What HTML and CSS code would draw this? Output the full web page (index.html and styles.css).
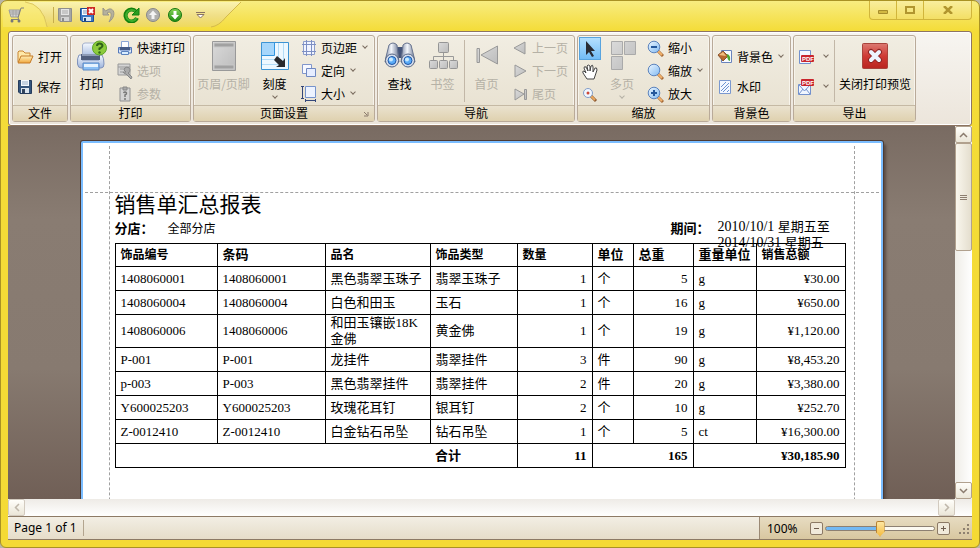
FILE: index.html
```html
<!DOCTYPE html>
<html lang="zh-CN">
<head>
<meta charset="utf-8">
<title>销售单汇总报表</title>
<link rel="stylesheet" href="styles.css">
</head>
<body>
<svg width="0" height="0" class="defs" aria-hidden="true">
  <defs>
    <linearGradient id="gray" x1="0" y1="0" x2="1" y2="1"><stop offset="0" stop-color="#dadada"/><stop offset="1" stop-color="#bcbcbc"/></linearGradient>
    <linearGradient id="blue" x1="0" y1="0" x2="1" y2="1"><stop offset="0" stop-color="#eef7ff"/><stop offset="1" stop-color="#7fb9f2"/></linearGradient>
    <linearGradient id="green" x1="0" y1="0" x2="0" y2="1"><stop offset="0" stop-color="#8ad75a"/><stop offset="1" stop-color="#1c8a12"/></linearGradient>
    <linearGradient id="steel" x1="0" y1="0" x2="1" y2="0"><stop offset="0" stop-color="#7c88a4"/><stop offset=".45" stop-color="#f4f7fc"/><stop offset="1" stop-color="#6c7894"/></linearGradient>
    <linearGradient id="printer" x1="0" y1="0" x2="0" y2="1"><stop offset="0" stop-color="#f5f9ff"/><stop offset="1" stop-color="#9db4dc"/></linearGradient>
    <linearGradient id="folder" x1="0" y1="0" x2="0" y2="1"><stop offset="0" stop-color="#fff0b8"/><stop offset="1" stop-color="#f0a63c"/></linearGradient>
    <linearGradient id="red" x1="0" y1="0" x2="0" y2="1"><stop offset="0" stop-color="#dc7a72"/><stop offset=".5" stop-color="#cf3b35"/><stop offset="1" stop-color="#b92520"/></linearGradient>
    <linearGradient id="tab" x1="0" y1="0" x2="0" y2="1"><stop offset="0" stop-color="#faf3b0"/><stop offset=".55" stop-color="#f0df86"/><stop offset="1" stop-color="#efd95c"/></linearGradient>
  </defs>
</svg>

<div class="window">
  <header class="titlebar">
    <svg class="titlebar-shape" width="245" height="28" viewBox="0 0 245 28" aria-hidden="true">
      <path d="M25 2Q43 4 47 27H211Q219 26 226 17L241 2Z" fill="url(#tab)"/>
      <path d="M25 2Q43 4 47 27M211 27Q219 26 226 17L241 2" fill="none" stroke="#d3b94c"/>
      <path d="M3 2H25Q43 4 47 27H3Z" fill="#faef9a" opacity=".35"/>
    </svg>
    <div class="quick">
      <button class="tool cart" aria-label="应用菜单"><svg width="17" height="16" viewBox="0 0 17 16"><path d="M1 3H12L10 10H3Z" fill="#d4d4d4" stroke="#9a9a9a"/><path d="M2 5H11M3 7H10M5 3V10M8 3V10" fill="none" stroke="#a4a4a4"/><path d="M16 1H13L10 11 11 12.500H3" fill="none" stroke="#808080"/><circle cx="4" cy="14" r="1.500" fill="#777"/><circle cx="11" cy="14" r="1.500" fill="#777"/></svg></button>
      <span class="quick-sep"></span>
      <button class="tool" aria-label="保存"><svg width="16" height="16" viewBox="0 0 16 16"><path d="M1.500 1.500H14.500V14.500H3L1.500 13Z" fill="#a5a5a5" stroke="#8e8e8e"/><path d="M4 2H12V8H4Z" fill="#e4e4e4"/><path d="M5 4H11M5 6H11" stroke="#aaa"/><path d="M4 10H12V14H4Z" fill="#d3d3d3"/><path d="M5 11H7V14H5Z" fill="#8b8b8b"/></svg></button>
      <button class="tool" aria-label="保存并关闭"><svg width="16" height="16" viewBox="0 0 16 16"><path d="M1.500 1.500H14.500V14.500H3L1.500 13Z" fill="#3977c5" stroke="#1d4c94"/><path d="M3 2H11V8H3Z" fill="#f7fbff"/><path d="M4 4H8M4 6H8" stroke="#7796bb"/><path d="M4 10H12V14H4Z" fill="#d7e4f2"/><path d="M5 11H7V14H5Z" fill="#174174"/><path d="M8 0H16V8H8Z" fill="#cc2925"/><path d="M10 2L14 6M14 2L10 6" stroke="#fff" stroke-width="2"/></svg></button>
      <button class="tool" aria-label="撤销"><svg width="16" height="16" viewBox="0 0 16 16"><path d="M2 1V8H8L6 6C10 3.500 12 7 8 15C15 10 14 1 8 2L4.500 4Z" fill="#b5b19d" stroke="#99968a"/></svg></button>
      <button class="tool" aria-label="刷新"><svg width="17" height="16" viewBox="0 0 17 16"><path d="M14 11A6 6 0 1 1 13 4.500" fill="none" stroke="#14810e" stroke-width="4"/><path d="M13.500 11A5.500 5.500 0 1 1 12.500 4.500" fill="none" stroke="#3ead2c" stroke-width="2"/><path d="M16 1V8H9Z" fill="#2b9d20" stroke="#14810e"/></svg></button>
      <button class="tool" aria-label="上移"><svg width="16" height="16" viewBox="0 0 16 16"><circle cx="8" cy="8" r="6.500" fill="#b0b0ae" stroke="#878787"/><path d="M8 3.500L12 8H9.500V12H6.500V8H4Z" fill="#f4f4f4"/></svg></button>
      <button class="tool" aria-label="下移"><svg width="16" height="16" viewBox="0 0 16 16"><circle cx="8" cy="8" r="6.500" fill="url(#green)" stroke="#167411"/><path d="M8 12.500L12 8H9.500V4H6.500V8H4Z" fill="#fff"/></svg></button>
      <button class="tool more" aria-label="自定义工具栏"><svg width="9" height="8" viewBox="0 0 9 8"><path d="M0 1.500H9M1 3.500L4.500 7 8 3.500Z" fill="#fff" stroke="#887263"/></svg></button>
    </div>
    <div class="caption">
      <button aria-label="最小化"><svg width="10" height="8" viewBox="0 0 10 8"><path d="M.5 4.500H9.500V7.500H.5Z" fill="#d2b843" stroke="#a68c2c"/></svg></button>
      <button aria-label="最大化"><svg width="10" height="8" viewBox="0 0 10 8"><path d="M1 1H9V7H1Z" fill="none" stroke="#b1962f" stroke-width="2"/></svg></button>
      <button class="caption-close" aria-label="关闭"><svg width="10" height="8" viewBox="0 0 10 8"><path d="M1 0L9 8M9 0L1 8" stroke="#b1962f" stroke-width="2.500"/></svg></button>
    </div>
  </header>

  <nav class="ribbon" aria-label="打印预览">
    <section class="group">
      <div class="tools pair">
        <button class="small"><svg width="17" height="14" viewBox="0 0 17 14"><path d="M1 12V2L2 1H6L8 3H13V6" fill="#ffe8a8" stroke="#c98634"/><path d="M1 13L4 6H16L13 13Z" fill="url(#folder)" stroke="#c47b28"/></svg>打开</button>
        <button class="small"><svg width="16" height="16" viewBox="0 0 16 16"><path d="M1.500 1.500H14.500V14.500H3L1.500 13Z" fill="#34557d" stroke="#263c5c"/><path d="M4 1H12V7H4Z" fill="#f4f9ff"/><path d="M5 3H11M5 5H11" stroke="#95acc6"/><path d="M4 9H12V14H4Z" fill="#dbe5ef"/><path d="M5 10H8V14H5Z" fill="#31445e"/></svg>保存</button>
      </div>
      <h2>文件</h2>
    </section>

    <section class="group">
      <div class="tools">
        <button class="large print"><svg width="32" height="32" viewBox="0 0 32 32"><path d="M6.500 5Q7 3 9 3H23V18H6.500Z" fill="url(#printer)" stroke="#a3b0cb"/><path d="M3 15Q1 18 1.500 24Q2 28 5 28H25Q28 28 28 24Q28 18 26 15H23V20H6V15Z" fill="url(#printer)" stroke="#7f92bb"/><path d="M5 14H24V20H5Z" fill="#4f5e7d"/><path d="M6 14H23V16H6Z" fill="#8d9bb6"/><path d="M7 23H23V30H7Z" fill="#8bc0f5" stroke="#5b87c4"/><path d="M8 24H22V27H8Z" fill="#e4f2ff"/><circle cx="23.500" cy="8" r="7" fill="#8ccb3c" stroke="#5da528"/><path d="M21 6Q21 3.500 23.500 3.500Q26.500 3.500 26.500 6Q26 7.500 23.500 8.500V10" stroke="#2f6418" stroke-width="2" fill="none"/><circle cx="23.500" cy="12.500" r="1.200" fill="#2f6418"/></svg><span>打印</span></button>
        <div class="stack print-stack">
          <button class="small"><svg width="16" height="16" viewBox="0 0 16 16"><path d="M4.500 1.500H11.500V8H4.500Z" fill="#fff" stroke="#8ca6d4"/><path d="M1.500 7.500H3V10H13V7.500H14.500V13H1.500Z" fill="#dce9fb" stroke="#5579bb"/><path d="M3 7H13V10H3Z" fill="#475c86"/><path d="M4.500 11.500H11.500V14.500H4.500Z" fill="#d9edff" stroke="#5b82bd"/></svg>快速打印</button>
          <button class="small" disabled><svg width="16" height="16" viewBox="0 0 16 16"><path d="M1 1H13V12H1Z" fill="#d4d4d4" stroke="#999"/><path d="M1 4H13M3 6H7M3 9H6" stroke="#999"/><path d="M7 7A3 3 0 1 1 11 10L15 14 14 16 9 11Q7 11 6 9L9 9Z" fill="#aaa" stroke="#888"/></svg>选项</button>
          <button class="small" disabled><svg width="16" height="16" viewBox="0 0 16 16"><path d="M3 2H13V15H3Z" fill="#d4d4d4" stroke="#909090"/><path d="M6 1H10V4H6Z" fill="#aaa" stroke="#888"/><path d="M6.500 7Q8 5 9.500 7Q10 8 8 9V11M8 12V14" stroke="#777" stroke-width="1.500" fill="none"/></svg>参数</button>
        </div>
      </div>
      <h2>打印</h2>
    </section>

    <section class="group">
      <div class="tools">
        <button class="large header-footer" disabled><svg width="32" height="32" viewBox="0 0 32 32"><path d="M4.500 1.500H27.500V30.500H4.500Z" fill="url(#gray)" stroke="#999"/><path d="M6 3H26V7H6ZM6 25H26V29H6Z" fill="#a1a1a1" stroke="#c8c8c8"/></svg><span>页眉/页脚</span></button>
        <button class="large scale"><svg width="32" height="32" viewBox="0 0 32 32"><path d="M2.500 2.500H29.500V29.500H2.500Z" fill="#eef8ff" stroke="#3d94d4"/><path d="M3 3H15V15H3Z" fill="#a6d6fb"/><path d="M15.500 3V15.500H3" fill="none" stroke="#3295df"/><path d="M19.500 3V19.500H3M24.500 3V24.500H3" fill="none" stroke="#b4dcf7"/><path d="M18 16L24 21 26 18V27H17L20 25 15 20Z" fill="#29292c"/></svg><span>刻度</span><i class="arrow"></i></button>
        <div class="stack setup-stack">
          <button class="small"><svg width="16" height="16" viewBox="0 0 16 16"><path d="M2.500 1.500H13.500V14.500H2.500Z" fill="#f1f4ff" stroke="#8c9cca"/><path d="M5.500 0V16M10.500 0V16M1 4.500H15M1 11.500H15" stroke="#7d8fc4"/></svg>页边距<i class="arrow"></i></button>
          <button class="small"><svg width="16" height="16" viewBox="0 0 16 16"><path d="M1.500 1.500H10.500V10.500H1.500Z" fill="#f7f9ff" stroke="#8196cb"/><path d="M5.500 5.500H14.500V13.500H5.500Z" fill="#e6edff" stroke="#7089c2"/></svg>定向<i class="arrow"></i></button>
          <button class="small"><svg width="16" height="16" viewBox="0 0 16 16"><path d="M4.500 .5H14.500V11.500H4.500Z" fill="#edf3ff" stroke="#7694cc"/><path d="M0 .5H3M1.500 1V12M0 12.500H3M4 14.500H15M4.500 13V16M14.500 13V16" stroke="#34477a" fill="none"/></svg>大小<i class="arrow"></i></button>
        </div>
      </div>
      <h2>页面设置</h2>
      <button class="launcher" aria-label="页面设置选项"><svg width="6" height="6" viewBox="0 0 6 6"><path d="M1 1L4 4M5 1V5H1" fill="none" stroke="#8b7b6c"/></svg></button>
    </section>

    <section class="group">
      <div class="tools">
        <button class="large find"><svg width="32" height="32" viewBox="0 0 32 32"><path d="M13 7H19V18H13Z" fill="#45557a"/><path d="M5 5Q9 1 13 5L15 22H1L2 17Z" fill="url(#steel)" stroke="#68748f"/><path d="M19 5Q23 1 27 5L30 17 31 22H17Z" fill="url(#steel)" stroke="#68748f"/><circle cx="8" cy="20.500" r="6.500" fill="#d7dfed" stroke="#566583"/><circle cx="24" cy="20.500" r="6.500" fill="#d7dfed" stroke="#566583"/><circle cx="8" cy="20.500" r="4" fill="#5aabf7" stroke="#1f56a5"/><circle cx="24" cy="20.500" r="4" fill="#5aabf7" stroke="#1f56a5"/><circle cx="7" cy="19.500" r="2" fill="#c9eaff"/><circle cx="23" cy="19.500" r="2" fill="#c9eaff"/></svg><span>查找</span></button>
        <button class="large bookmark" disabled><svg width="32" height="32" viewBox="0 0 32 32"><path d="M16.500 13V20M6.500 20V16.500H26.500V20" stroke="#999" fill="none"/><g fill="url(#gray)" stroke="#959595"><rect x="11.500" y="2.500" width="10" height="10" rx="1"/><rect x="2.500" y="20.500" width="8" height="8" rx="1"/><rect x="12.500" y="20.500" width="8" height="8" rx="1"/><rect x="22.500" y="20.500" width="8" height="8" rx="1"/></g></svg><span>书签</span></button>
        <span class="rule"></span>
        <button class="large first" disabled><svg width="32" height="32" viewBox="0 0 32 32"><path d="M6 8.500H8.500V22.500H6ZM26.500 6V24L10 15Z" fill="url(#gray)" stroke="#999"/></svg><span>首页</span></button>
        <div class="stack nav-stack">
          <button class="small" disabled><svg width="16" height="16" viewBox="0 0 16 16"><path d="M13 2V14L2 8Z" fill="url(#gray)" stroke="#999"/></svg>上一页</button>
          <button class="small" disabled><svg width="16" height="16" viewBox="0 0 16 16"><path d="M3 2V14L14 8Z" fill="url(#gray)" stroke="#999"/></svg>下一页</button>
          <button class="small" disabled><svg width="16" height="16" viewBox="0 0 16 16"><path d="M3 3V14L12 8ZM12.500 3.500H14.500V13.500H12.500Z" fill="url(#gray)" stroke="#999"/></svg>尾页</button>
        </div>
      </div>
      <h2>导航</h2>
    </section>

    <section class="group">
      <div class="tools">
        <div class="modes">
          <button class="mode active" aria-label="选择"><svg width="16" height="20" viewBox="0 0 16 20"><path d="M4 2V16L7 13 10 18 12 17 9 12H13Z" fill="#292c35"/></svg></button>
          <button class="mode" aria-label="手形工具"><svg width="18" height="18" viewBox="0 0 18 18"><path d="M6 16L2 10Q1 8 3 8L5 10 3 5Q3 3 5 4L7 8 6 3Q7 1 9 3L9 8 10 3Q12 1 12 4V9L14 5Q16 4 16 7L14 13 13 16Z" fill="#fff" stroke="#444"/></svg></button>
          <button class="mode" aria-label="放大镜"><svg width="16" height="16" viewBox="0 0 16 16"><path d="M9 9L14 14" stroke="#8d5931" stroke-width="3"/><path d="M9 9L13 13" stroke="#eaa75d" stroke-width="2"/><circle cx="6" cy="6" r="4.500" fill="#f1f7ff" stroke="#819dc8"/><circle cx="6" cy="6" r="1.500" fill="#cd4938"/></svg></button>
        </div>
        <button class="large pages" disabled><svg width="32" height="32" viewBox="0 0 32 32"><path d="M5.500 1.500H16.500V14.500H5.500ZM18.500 1.500H29.500V14.500H18.500ZM5.500 16.500H16.500V29.500H5.500Z" fill="url(#gray)" stroke="#aaa"/></svg><span>多页</span><i class="arrow"></i></button>
        <div class="stack zoom-stack">
          <button class="small"><svg width="17" height="17" viewBox="0 0 17 17"><path d="M10 10L16 16" stroke="#a56835" stroke-width="3"/><path d="M11 11L15 15" stroke="#f0b16c" stroke-width="2"/><circle cx="7" cy="7" r="5.800" fill="url(#blue)" stroke="#5c83bd"/><path d="M4 7H10" stroke="#25589c" stroke-width="2"/></svg>缩小</button>
          <button class="small"><svg width="17" height="17" viewBox="0 0 17 17"><path d="M10 10L16 16" stroke="#a56835" stroke-width="3"/><path d="M11 11L15 15" stroke="#f0b16c" stroke-width="2"/><circle cx="7" cy="7" r="5.800" fill="url(#blue)" stroke="#5c83bd"/></svg>缩放<i class="arrow"></i></button>
          <button class="small"><svg width="17" height="17" viewBox="0 0 17 17"><path d="M10 10L16 16" stroke="#a56835" stroke-width="3"/><path d="M11 11L15 15" stroke="#f0b16c" stroke-width="2"/><circle cx="7" cy="7" r="5.800" fill="url(#blue)" stroke="#5c83bd"/><path d="M4 7H10M7 4V10" stroke="#25589c" stroke-width="2"/></svg>放大</button>
        </div>
      </div>
      <h2>缩放</h2>
    </section>

    <section class="group">
      <div class="tools pair">
        <button class="small"><svg width="16" height="16" viewBox="0 0 16 16"><path d="M4.500 1.500H14.500V13.500H4.500Z" fill="#f8fbff" stroke="#6a84bd"/><path d="M1 6L6 2 11 7 6 12Z" fill="#b86930" stroke="#8a5530"/><path d="M2 6L6 3 9 7Z" fill="#f2c083"/><path d="M10 5Q14 6 13 12Q10 12 10 5Z" fill="#4ba831"/></svg>背景色<i class="arrow"></i></button>
        <button class="small"><svg width="16" height="16" viewBox="0 0 16 16"><path d="M2.500 1.500H13.500V14.500H2.500Z" fill="#f4f8ff" stroke="#7a98cf"/><path d="M4 8L9 3M4 12L12 4M6 13L12 7M10 13L12 11" stroke="#6b91d0"/></svg>水印</button>
      </div>
      <h2>背景色</h2>
    </section>

    <section class="group">
      <div class="tools">
        <div class="pair export-stack">
          <button class="small" aria-label="导出 PDF"><svg width="16" height="16" viewBox="0 0 16 16"><path d="M1.500 1.500H12.500V14.500H1.500Z" fill="#f3f7ff" stroke="#7391cd"/><rect x="3" y="6" width="13" height="7" rx="1" fill="#c9252d"/><text x="4" y="12" class="pdf">PDF</text></svg><i class="arrow"></i></button>
          <button class="small" aria-label="发送 PDF"><svg width="16" height="16" viewBox="0 0 16 16"><path d="M.5 5.500H12.500V15.500H.5Z" fill="#f1f6ff" stroke="#7391cd"/><path d="M1 6L6.500 12 12 6M1 15L5 10M12 15L8 10" fill="none" stroke="#7391cd"/><rect x="3" y="0" width="13" height="7" rx="1" fill="#c9252d"/><text x="4" y="6" class="pdf">PDF</text></svg><i class="arrow"></i></button>
        </div>
        <span class="rule export-rule"></span>
        <button class="large close"><svg width="32" height="32" viewBox="0 0 32 32"><rect x="3.500" y="3.500" width="25" height="25" rx="1" fill="url(#red)" stroke="#a8443c"/><path d="M12 12L20 20M20 12L12 20" stroke="#8e2424" stroke-width="6" stroke-linecap="round"/><path d="M12 12L20 20M20 12L12 20" stroke="#eef5ff" stroke-width="4" stroke-linecap="round"/></svg><span>关闭打印预览</span></button>
      </div>
      <h2>导出</h2>
    </section>
  </nav>

  <div class="viewer">
    <main class="workspace">
      <article class="paper">
        <i class="guide guide-left"></i><i class="guide guide-right"></i><i class="guide guide-top"></i>
        <h1>销售单汇总报表</h1>
        <div class="info">
          <strong>分店：</strong><span class="branch">全部分店</span>
          <strong class="period">期间：</strong>
          <span class="dates"><span class="day">2010/10/1 </span>星期五至<br><span class="day">2014/10/31 </span>星期五</span>
        </div>
        <table>
          <colgroup><col class="c-id"><col class="c-code"><col class="c-name"><col class="c-type"><col class="c-qty"><col class="c-unit"><col class="c-weight"><col class="c-wunit"><col class="c-total"></colgroup>
          <thead><tr><th class="tight">饰品编号</th><th>条码</th><th class="tight">品名</th><th class="tight">饰品类型</th><th class="tight">数量</th><th>单位</th><th>总重</th><th>重量单位</th><th class="tight">销售总额</th></tr></thead>
          <tbody>
            <tr><td>1408060001</td><td>1408060001</td><td>黑色翡翠玉珠子</td><td>翡翠玉珠子</td><td class="num">1</td><td>个</td><td class="num">5</td><td>g</td><td class="num">¥30.00</td></tr>
            <tr><td>1408060004</td><td>1408060004</td><td>白色和田玉</td><td>玉石</td><td class="num">1</td><td>个</td><td class="num">16</td><td>g</td><td class="num">¥650.00</td></tr>
            <tr><td>1408060006</td><td>1408060006</td><td class="wrap">和田玉镶嵌18K金佛</td><td>黄金佛</td><td class="num">1</td><td>个</td><td class="num">19</td><td>g</td><td class="num">¥1,120.00</td></tr>
            <tr><td>P-001</td><td>P-001</td><td>龙挂件</td><td>翡翠挂件</td><td class="num">3</td><td>件</td><td class="num">90</td><td>g</td><td class="num">¥8,453.20</td></tr>
            <tr><td>p-003</td><td>P-003</td><td>黑色翡翠挂件</td><td>翡翠挂件</td><td class="num">2</td><td>件</td><td class="num">20</td><td>g</td><td class="num">¥3,380.00</td></tr>
            <tr><td>Y600025203</td><td>Y600025203</td><td>玫瑰花耳钉</td><td>银耳钉</td><td class="num">2</td><td>个</td><td class="num">10</td><td>g</td><td class="num">¥252.70</td></tr>
            <tr><td>Z-0012410</td><td>Z-0012410</td><td>白金钻石吊坠</td><td>钻石吊坠</td><td class="num">1</td><td>个</td><td class="num">5</td><td>ct</td><td class="num">¥16,300.00</td></tr>
          </tbody>
          <tfoot><tr><td colspan="3" class="open-right"></td><td class="open-left">合计</td><td class="num">11</td><td colspan="2" class="num">165</td><td colspan="2" class="num">¥30,185.90</td></tr></tfoot>
        </table>
      </article>
    </main>
    <div class="vscroll">
      <button class="scroll-button" aria-label="向上滚动"><svg width="9" height="6" viewBox="0 0 9 6"><path d="M1 5L4.500 1.500 8 5"/></svg></button>
      <div class="thumb"><i></i><i></i><i></i></div>
      <button class="scroll-button last" aria-label="向下滚动"><svg width="9" height="6" viewBox="0 0 9 6"><path d="M1 1L4.500 4.500 8 1"/></svg></button>
    </div>
  </div>
  <div class="hscroll">
    <button class="scroll-button faded" aria-label="向左滚动"><svg width="6" height="9" viewBox="0 0 6 9"><path d="M5 1L1.500 4.500 5 8"/></svg></button>
    <button class="scroll-button faded" aria-label="向右滚动"><svg width="6" height="9" viewBox="0 0 6 9"><path d="M1 1L4.500 4.500 1 8"/></svg></button>
  </div>
  <footer class="status">
    <span class="page-count">Page 1 of 1</span>
    <div class="zoom">
      <label for="zoom">100%</label>
      <button aria-label="缩小"><svg width="7" height="7" viewBox="0 0 7 7"><path d="M1 3.500H6"/></svg></button>
      <input id="zoom" type="range" min="0" max="200" value="100">
      <button aria-label="放大"><svg width="7" height="7" viewBox="0 0 7 7"><path d="M1 3.500H6M3.500 1V6"/></svg></button>
      <svg class="grip" width="14" height="14" viewBox="0 0 14 14"><path d="M9 1H11V3H9ZM5 5H7V7H5ZM9 5H11V7H9ZM1 9H3V11H1ZM5 9H7V11H5ZM9 9H11V11H9Z" fill="#8e8170"/></svg>
    </div>
  </footer>
</div>
</body>
</html>
```
FILE: styles.css
```css
* { box-sizing: border-box; }
body {
  margin: 0;
  background: #b9b5a5;
  color: #000;
  font-family: "Noto Sans CJK SC", sans-serif;
  font-size: 12px;
}
button {
  padding: 0;
  border: 0;
  background: none;
  color: inherit;
  font: inherit;
  white-space: nowrap;
}
svg { display: block; flex: none; }
h1, h2 { margin: 0; }
.defs { position: absolute; }

.window {
  display: flex;
  flex-direction: column;
  height: 100vh;
  padding: 0 7px 7px;
  border: 1px solid #a99224;
  border-radius: 7px 7px 6px 6px;
  background: linear-gradient(#f8ec80, #f4dc38 30px, #f4da35);
  overflow: hidden;
}

/* Title bar */
.titlebar {
  position: relative;
  display: flex;
  flex: 0 0 29px;
  justify-content: space-between;
  align-items: flex-start;
}
.titlebar-shape { position: absolute; left: -8px; top: -1px; }
.quick { position: relative; display: flex; align-items: center; height: 27px; }
.tool { width: 16px; margin-right: 6px; }
.cart { width: 17px; margin-right: 28px; }
.quick-sep { width: 1px; height: 16px; margin-right: 3px; background: #c6ad4c; }
.more { width: 9px; margin-left: 7px; }
.caption {
  display: flex;
  height: 19px;
  border: 1px solid #d1b53b;
  border-top: 0;
  border-radius: 0 0 4px 4px;
  background: linear-gradient(#f9ee9e, #f3df64);
}
.caption button {
  display: flex;
  align-items: center;
  justify-content: center;
  width: 27px;
  border-right: 1px solid #d1b53b;
}
.caption .caption-close { width: 47px; border: 0; }

/* Ribbon */
.ribbon {
  display: grid;
  grid-template-columns: 56px 121px 182px 198px 133px 79px 123px;
  gap: 2px;
  flex: 0 0 95px;
  margin-top: 1px;
  padding: 3px;
  border: 1px solid #8d7462;
  border-radius: 3px;
  background: linear-gradient(#f7f5f1, #ece5db);
  box-shadow: inset 0 0 0 1px #fff;
}
.group {
  position: relative;
  display: flex;
  flex-direction: column;
  min-width: 0;
  height: 87px;
  border: 1px solid #b9aa99;
  border-radius: 3px;
  background: linear-gradient(#f1ede2, #e7e0cf);
  box-shadow: inset 0 0 0 1px #f7f4ec;
}
.group h2 {
  height: 16px;
  border-top: 1px solid #c5b9a4;
  background: linear-gradient(#eae2cf, #dfd1af);
  font-size: 12px;
  font-weight: 400;
  line-height: 14px;
  text-align: center;
}
.tools { display: flex; flex: 1; min-height: 0; }
.pair { display: flex; flex-direction: column; gap: 14px; padding: 13px 0 0 4px; }
.small {
  display: flex;
  align-items: center;
  gap: 4px;
  height: 16px;
  line-height: 16px;
}
.stack { display: flex; flex-direction: column; gap: 7px; padding-top: 4px; }
.large {
  display: flex;
  flex-direction: column;
  align-items: center;
  padding-top: 4px;
  line-height: 16px;
}
.large span { margin-top: 4px; }
button:disabled { color: #b5b1a6; }
.arrow {
  width: 4px;
  height: 4px;
  margin: 0 2px;
  border: solid #796b5e;
  border-width: 0 1px 1px 0;
  transform: rotate(45deg);
}
button:disabled .arrow { border-color: #b5b1a6; }
.small .arrow { margin-top: -5px; }
.large .arrow { margin-top: 2px; }
.rule { width: 1px; height: 62px; margin-top: 4px; background: #c2b7a7; }
.print { width: 41px; }
.print-stack { margin-left: 5px; }
.header-footer { width: 59px; }
.scale { width: 43px; }
.setup-stack { margin-left: 5px; }
.find { width: 43px; }
.bookmark { width: 43px; }
.first { width: 43px; }
.nav-stack { margin-left: 4px; }
.modes { width: 24px; padding: 1px; }
.mode { display: flex; align-items: center; justify-content: center; width: 22px; height: 23px; }
.mode.active { border: 1px solid #58a4df; background: linear-gradient(#b4e0ff, #72bcf6); }
.pages { width: 40px; }
.zoom-stack { margin-left: 5px; }
.export-stack { width: 40px; }
.export-stack .small { gap: 8px; }
.export-rule { margin-right: 1px; }
.close { width: 78px; }
.launcher { position: absolute; right: 5px; bottom: 4px; }
.pdf { fill: #fff; font-family: "Liberation Sans", sans-serif; font-size: 6px; font-weight: 700; }

/* Preview */
.viewer { display: flex; flex: 1; min-height: 0; }
.workspace {
  flex: 1;
  min-width: 0;
  padding-top: 15px;
  background: linear-gradient(#796b62, #897c72 25%, #877a70 65%, #705f56);
  overflow: hidden;
}
.paper {
  position: relative;
  width: 802px;
  height: 500px;
  margin: 0 auto;
  padding: 50px 32px 0;
  border: 2px solid #7bbdff;
  border-radius: 2px;
  background: #fff;
  box-shadow: 0 0 0 1px #4d3b35, 3px 3px 3px #594a43;
  font-family: "Liberation Serif", "Noto Sans CJK SC", serif;
  font-size: 13px;
}
.guide { position: absolute; border: 0 dashed #a0a0a0; }
.guide-left, .guide-right { top: 3px; bottom: 3px; border-left-width: 1px; }
.guide-left { left: 26px; }
.guide-right { right: 26px; }
.guide-top { top: 49px; left: 2px; right: 2px; border-top-width: 1px; }
.paper h1 { height: 24px; font-size: 21px; font-weight: 400; line-height: 24px; }
.info { display: flex; height: 26px; padding-top: 2px; line-height: 20px; }
.branch { margin-left: 14px; font-size: 12px; }
.info .period { margin-left: auto; }
.dates { width: 127px; margin-left: 8px; margin-right: 4px; line-height: 16px; white-space: nowrap; }
.day { font-size: 14px; }
table { width: 731px; border-collapse: collapse; table-layout: fixed; }
th, td {
  height: 24px;
  padding: 0 5px;
  border: 1px solid #000;
  line-height: 16px;
  text-align: left;
  white-space: nowrap;
}
th { height: 23px; padding: 0 0 0 5px; }
.tight { font-size: 12px; }
.num { text-align: right; }
.wrap { white-space: normal; }
tfoot { font-weight: 700; }
.open-right { border-right: 0; }
.open-left { border-left: 0; }
.c-id { width: 102px; }
.c-code { width: 108px; }
.c-name { width: 105px; }
.c-type { width: 87px; }
.c-qty { width: 75px; }
.c-unit { width: 41px; }
.c-weight { width: 60px; }
.c-wunit { width: 63px; }
.c-total { width: 89px; }

/* Scroll bars */
.vscroll { display: flex; flex-direction: column; flex: 0 0 17px; background: linear-gradient(90deg, #efede7, #fff); }
.scroll-button {
  display: flex;
  align-items: center;
  justify-content: center;
  width: 17px;
  height: 17px;
  border: 1px solid #b1a18e;
  border-radius: 2px;
  background: linear-gradient(#fffefa, #ebe6d8);
}
.scroll-button path { fill: none; stroke: #8b7c6e; stroke-width: 1.5; }
.last { margin-top: auto; }
.faded { border-color: #d2cabf; }
.scroll-button.faded path { stroke: #bfb7aa; }
.thumb {
  display: flex;
  flex-direction: column;
  align-items: center;
  justify-content: center;
  gap: 1px;
  height: 108px;
  border: 1px solid #b1a18e;
  border-radius: 2px;
  background: linear-gradient(90deg, #f9f6ed, #e4dece);
}
.thumb i { width: 7px; height: 1px; background: #8c7e70; }
.hscroll { display: flex; flex: 0 0 17px; justify-content: space-between; padding-right: 17px; background: linear-gradient(#eeebe6, #fff); }

/* Status bar */
.status {
  display: flex;
  flex: 0 0 24px;
  justify-content: space-between;
  border: 1px solid #8d7a65;
  border-width: 1px 0;
  background: linear-gradient(#f2eee4, #e6ddc9);
  font-family: "Noto Sans", sans-serif;
}
.page-count { align-self: center; padding: 0 6px; border-right: 1px solid #b3a58f; line-height: 16px; }
.zoom {
  display: flex;
  align-items: center;
  gap: 2px;
  padding-left: 7px;
  border-left: 1px solid #9b8974;
  background: linear-gradient(#e7dcc2, #d8c7a0);
}
.zoom label { width: 41px; }
.zoom button {
  display: flex;
  align-items: center;
  justify-content: center;
  width: 13px;
  height: 13px;
  border: 1px solid #8c7965;
  border-radius: 2px;
  background: #f0e9da;
}
.zoom button path { stroke: #6f5d4e; }
.zoom input { appearance: none; width: 110px; height: 18px; margin: 0; background: none; }
.zoom input::-webkit-slider-runnable-track {
  height: 5px;
  border: 1px solid #8d8072;
  border-radius: 3px;
  background: linear-gradient(90deg, #72b8f3 50%, #fcf9f1 50%);
}
.zoom input::-webkit-slider-thumb {
  appearance: none;
  width: 9px;
  height: 16px;
  margin-top: -6px;
  border-radius: 2px;
  background: linear-gradient(#ffeaa8, #f2b73b);
  box-shadow: inset 0 0 0 1px #b58134;
  clip-path: polygon(0 0, 100% 0, 100% 70%, 50% 100%, 0 70%);
}
.grip { margin: 4px 0 0 6px; }
```
